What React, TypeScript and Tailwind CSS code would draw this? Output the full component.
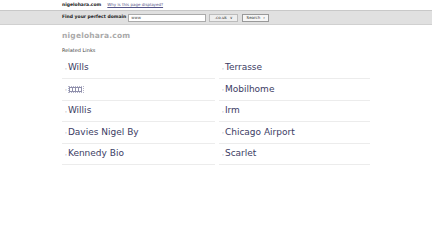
import React from 'react';

const left = ['Wills', '__TOFU__', 'Willis', 'Davies Nigel By', 'Kennedy Bio'];
const right = ['Terrasse', 'Mobilhome', 'Irm', 'Chicago Airport', 'Scarlet'];

const Tofu = () => (
    <span className="inline-flex items-center border border-dotted border-[#b4b4c8] px-[0.5px] h-[7px] align-middle">
        {[0, 1, 2, 3].map((i) => (
            <span key={i} className="inline-block w-[4px] h-[5px] border border-[#9090ac] -ml-px first:ml-0" />
        ))}
    </span>
);

const LinkRow = ({ label }: { label: string }) => (
    <div className="h-[21.5px] flex items-center border-b border-[#ececec] pl-[3px] text-[9px] text-[#3c3c64]">
        <span className="text-[6px] mr-[1px]">·</span>
        {label === '__TOFU__' ? <Tofu /> : <span>{label}</span>}
    </div>
);

export default function App() {
    return (
        <div className="w-[432px] h-[243px] bg-white overflow-hidden" style={{ fontFamily: '"DejaVu Sans", sans-serif' }}>
            <div className="h-[10px] flex items-center pl-[62px] gap-[6px]">
                <span className="text-[4.5px] font-bold text-[#222]">nigelohara.com</span>
                <span className="text-[4px] text-[#558] underline">Why is this page displayed?</span>
            </div>
            <div className="h-[15px] bg-[#e0e0e0] border-t border-[#c8c8c8] border-b border-b-[#d0d0d0] flex items-center pl-[62px]">
                <span className="text-[4.5px] font-bold text-[#222] mr-[2px]">Find your perfect domain</span>
                <div className="w-[78px] h-[8px] bg-white border border-[#aaa] text-[4px] text-[#555] pl-[2px] flex items-center">www</div>
                <div className="ml-[3px] w-[29px] h-[8px] bg-[#eee] border border-[#bbb] text-[4px] text-[#333] flex items-center justify-center gap-[3px]">
                    <span>.co.uk</span><span className="text-[4px]">∨</span>
                </div>
                <div className="ml-[4px] w-[27px] h-[8px] bg-[#f6f6f6] border border-[#999] text-[4px] text-[#333] flex items-center justify-center gap-[3px]">
                    <span>Search</span><span className="font-bold">›</span>
                </div>
            </div>
            <div className="pl-[62px] pt-[5px]">
                <div className="text-[7.5px] font-bold text-[#aaaaaa] tracking-[0.2px]">nigelohara.com</div>
                <div className="text-[5px] text-[#444] mt-[6px]">Related Links</div>
                <div className="flex mt-[3px] gap-[4px]">
                    <div className="w-[153px]">
                        {left.map((l) => <LinkRow key={l} label={l} />)}
                    </div>
                    <div className="w-[151px]">
                        {right.map((l) => <LinkRow key={l} label={l} />)}
                    </div>
                </div>
            </div>
        </div>
    );
}
